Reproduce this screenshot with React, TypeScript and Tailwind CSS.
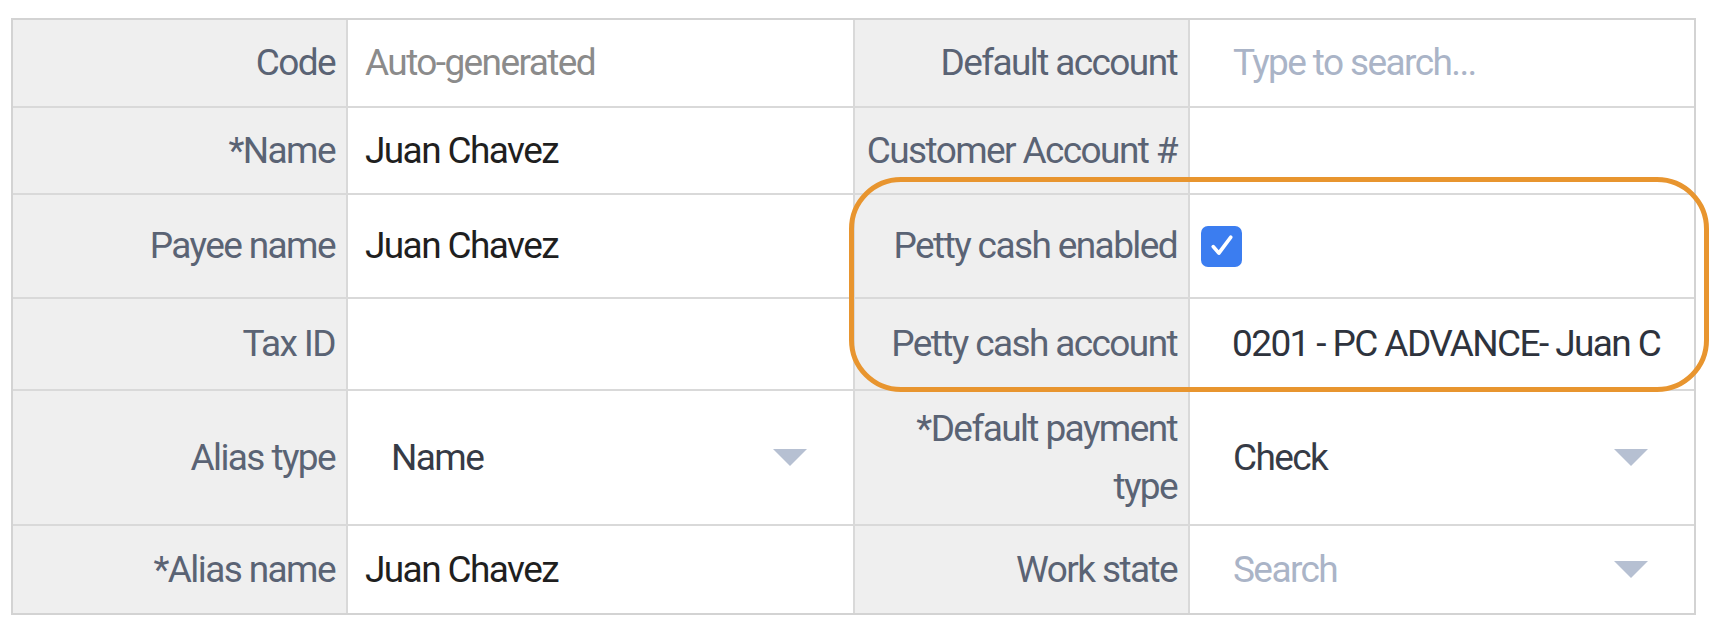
import React from 'react';

type Row = {
  label: string;
  value: React.ReactNode;
  rLabel: React.ReactNode;
  rValue: React.ReactNode;
  h: string;
  last?: boolean;
};

function Caret() {
  return (
    <svg width="34" height="17" viewBox="0 0 34 17" className="shrink-0">
      <polygon points="0,0 34,0 17,17" fill="#b6c0d2" />
    </svg>
  );
}

function Select({ text, placeholder }: { text: string; placeholder?: boolean }) {
  return (
    <div className="flex w-full items-center justify-between pl-[43px] pr-[46px]">
      <span className={placeholder ? 'text-[#aab4c7]' : 'text-[#363b46]'}>{text}</span>
      <Caret />
    </div>
  );
}

function Checkbox() {
  return (
    <div className="flex h-[41px] w-[41px] items-center justify-center rounded-[7px] bg-[#3b7df0]">
      <svg width="30" height="30" viewBox="0 0 24 24" fill="none">
        <path d="M5 12.5l4.5 5.2L19 5" stroke="white" strokeWidth="3" strokeLinecap="round" strokeLinejoin="round" />
      </svg>
    </div>
  );
}

const rows: Row[] = [
  {
    label: 'Code',
    value: <span className="pl-[17px] text-[#8b8b8b]">Auto-generated</span>,
    rLabel: 'Default account',
    rValue: <span className="pl-[43px] text-[#aab4c7]">Type to search...</span>,
    h: 'h-[88px]',
  },
  {
    label: '*Name',
    value: <span className="pl-[17px] text-[#1f1f1f]">Juan Chavez</span>,
    rLabel: 'Customer Account #',
    rValue: null,
    h: 'h-[87px]',
  },
  {
    label: 'Payee name',
    value: <span className="pl-[17px] text-[#1f1f1f]">Juan Chavez</span>,
    rLabel: 'Petty cash enabled',
    rValue: (
      <div className="pl-[11px]">
        <Checkbox />
      </div>
    ),
    h: 'h-[104px]',
  },
  {
    label: 'Tax ID',
    value: null,
    rLabel: 'Petty cash account',
    rValue: <span className="pl-[42px] text-[#2e333d]">0201 - PC ADVANCE- Juan C</span>,
    h: 'h-[92px]',
  },
  {
    label: 'Alias type',
    value: <Select text="Name" />,
    rLabel: (
      <span className="leading-[58px]">
        *Default payment
        <br />
        type
      </span>
    ),
    rValue: <Select text="Check" />,
    h: 'h-[135px]',
  },
  {
    label: '*Alias name',
    value: <span className="pl-[17px] text-[#1f1f1f]">Juan Chavez</span>,
    rLabel: 'Work state',
    rValue: <Select text="Search" placeholder />,
    h: 'h-[87px]',
    last: true,
  },
];

export default function App() {
  return (
    <div
      className="relative h-[634px] w-[1732px] overflow-hidden bg-white text-[37px] tracking-[-1.6px]"
      style={{ fontFamily: 'Roboto, "Liberation Sans", sans-serif' }}
    >
      <div className="pl-[11px] pt-[18px]">
        <div className="w-[1685px] border-2 border-[#d3d3d3]">
          {rows.map((r, i) => {
            const line = r.last ? '' : 'border-b-2 border-b-[#d9d9d9]';
            return (
              <div key={i} className={`flex ${r.h}`}>
                <div className={`flex w-[335px] items-center justify-end whitespace-nowrap border-r-2 border-r-[#d9d9d9] bg-[#efefef] pr-[11px] text-right text-[#5a6374] ${line}`}>
                  {r.label}
                </div>
                <div className={`flex w-[507px] items-center whitespace-nowrap border-r-2 border-r-[#d9d9d9] bg-white ${line}`}>
                  {r.value}
                </div>
                <div className={`flex w-[335px] items-center justify-end whitespace-nowrap border-r-2 border-r-[#d9d9d9] bg-[#efefef] pr-[11px] text-right text-[#5a6374] ${line}`}>
                  {r.rLabel}
                </div>
                <div className={`flex w-[504px] items-center whitespace-nowrap bg-white ${line}`}>
                  {r.rValue}
                </div>
              </div>
            );
          })}
        </div>
      </div>
      <div className="pointer-events-none absolute left-[849px] top-[177px] h-[215px] w-[860px] rounded-[52px] border-[5px] border-[#e8952f]" />
    </div>
  );
}
